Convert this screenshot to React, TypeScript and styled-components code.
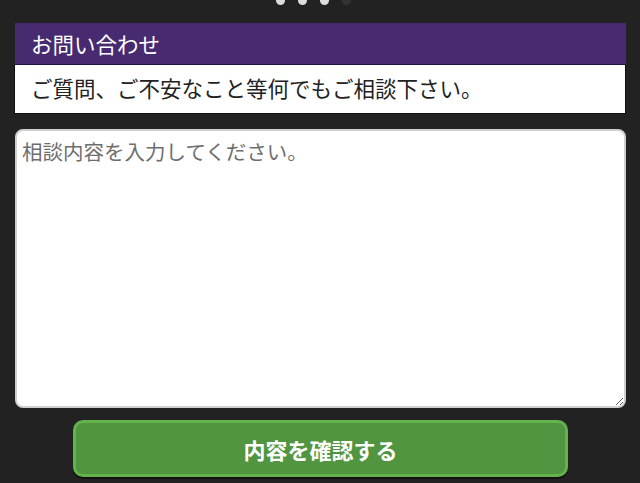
import * as React from "react";
import styled, { createGlobalStyle } from "styled-components";

const GlobalStyle = createGlobalStyle`
  html, body {
    margin: 0;
    padding: 0;
    background: #222222;
    overflow: hidden;
  }
  body {
    font-family: "Noto Sans CJK JP", "Noto Sans", sans-serif;
  }
`;

const Page = styled.div`
  display: flex;
  flex-direction: column;
  width: 640px;
  height: 483px;
  box-sizing: border-box;
  padding: 0 14px 0 14px;
`;

const Dots = styled.div`
  display: flex;
  justify-content: center;
  gap: 13px;
  height: 5px;
  margin-top: -4px;
  padding-right: 13px;
`;

const Dot = styled.span<{ $active?: boolean }>`
  width: 9px;
  height: 9px;
  border-radius: 50%;
  background: ${(p) => (p.$active ? "#dcdcdc" : "#333333")};
`;

const Card = styled.section`
  margin-top: 22px;
  display: flex;
  flex-direction: column;
`;

const CardTitle = styled.h2`
  margin: 0 0 0 1px;
  height: 41px;
  line-height: 41px;
  padding-left: 16px;
  background: #472a70;
  border-bottom: 1px solid #1f1440;
  color: #ffffff;
  font-size: 21.5px;
  font-weight: 400;
`;

const CardBody = styled.p`
  margin: 0;
  height: 48px;
  line-height: 46px;
  padding-left: 16px;
  background: #ffffff;
  border: 1px solid #111111;
  border-top: none;
  color: #222222;
  font-size: 21.5px;
`;

const Message = styled.textarea`
  margin: 15px 0 0 1px;
  width: 611px;
  height: 279px;
  box-sizing: border-box;
  padding: 7px 5px;
  border: 2px solid #cfcfcf;
  border-radius: 8px;
  background: #ffffff;
  font-family: "Noto Sans CJK JP", "Noto Sans", sans-serif;
  font-size: 20.5px;
  line-height: 27px;
  color: #222222;
  outline: none;

  &::placeholder {
    color: #6e6e6e;
  }
`;

const SubmitButton = styled.button`
  align-self: center;
  margin: 12px 0 0 1px;
  width: 495px;
  height: 57px;
  border: 3px solid #64b24c;
  border-radius: 10px;
  background: #529541;
  box-shadow: 0 2px 0 #121212;
  color: #ffffff;
  font-family: "Noto Sans CJK JP", "Noto Sans", sans-serif;
  font-size: 22px;
  font-weight: 700;
  cursor: pointer;
`;

const App = () => {
  const [text, setText] = React.useState("");

  return (
    <>
      <GlobalStyle />
      <Page>
        <Dots>
          <Dot $active />
          <Dot $active />
          <Dot $active />
          <Dot />
        </Dots>
        <Card>
          <CardTitle>お問い合わせ</CardTitle>
          <CardBody>ご質問、ご不安なこと等何でもご相談下さい。</CardBody>
        </Card>
        <Message
          placeholder="相談内容を入力してください。"
          value={text}
          onChange={(e) => setText(e.target.value)}
        />
        <SubmitButton type="button">内容を確認する</SubmitButton>
      </Page>
    </>
  );
};

export default App;
